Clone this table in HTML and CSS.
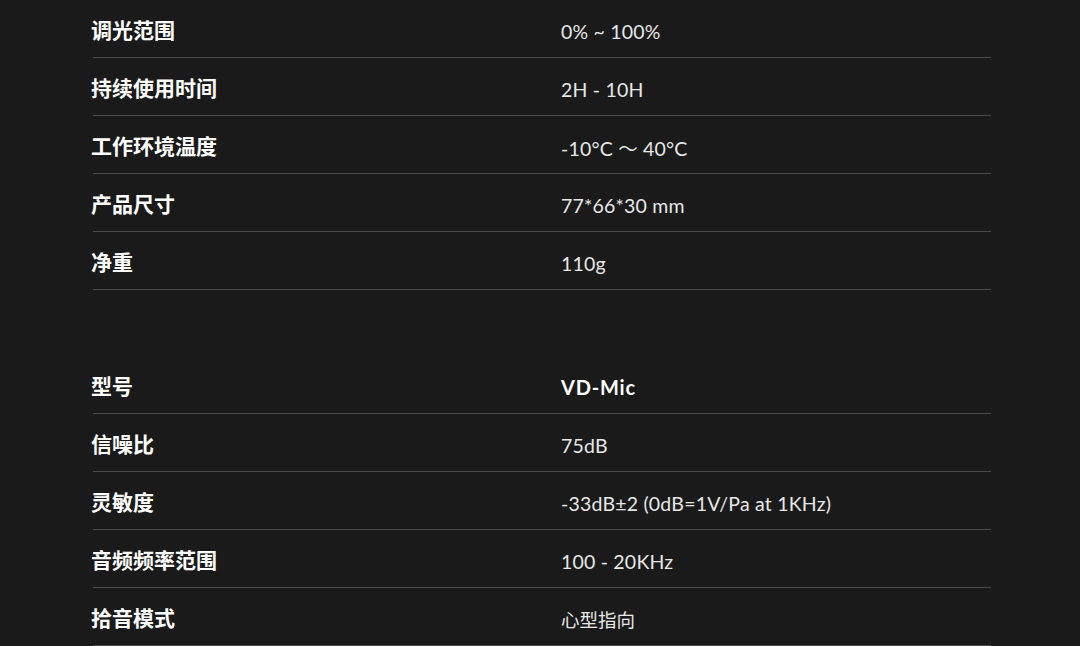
FILE: index.html
```html
<!DOCTYPE html>
<html lang="zh">
<head>
<meta charset="utf-8">
<link rel="stylesheet" href="styles.css">
</head>
<body>
<div class="page">
  <div class="spec">
    <div class="row"><div class="label">调光范围</div><div class="value">0% ~ 100%</div></div>
    <div class="row"><div class="label">持续使用时间</div><div class="value">2H - 10H</div></div>
    <div class="row"><div class="label">工作环境温度</div><div class="value">-10°C ～ 40°C</div></div>
    <div class="row"><div class="label">产品尺寸</div><div class="value">77*66*30 mm</div></div>
    <div class="row"><div class="label">净重</div><div class="value">110g</div></div>
  </div>
  <div class="spec spec-second">
    <div class="row"><div class="label">型号</div><div class="value value-strong">VD-Mic</div></div>
    <div class="row"><div class="label">信噪比</div><div class="value">75dB</div></div>
    <div class="row"><div class="label">灵敏度</div><div class="value">-33dB±2 (0dB=1V/Pa at 1KHz)</div></div>
    <div class="row"><div class="label">音频频率范围</div><div class="value">100 - 20KHz</div></div>
    <div class="row"><div class="label">拾音模式</div><div class="value value-cjk">心型指向</div></div>
  </div>
</div>
</body>
</html>
```
FILE: styles.css
```css
html, body {
  margin: 0;
  padding: 0;
  background: #1a1a1a;
}
.page {
  width: 1080px;
  height: 646px;
  overflow: hidden;
  padding-left: 93px;
  box-sizing: border-box;
  font-family: "Lato", "Noto Sans CJK SC", sans-serif;
}
.spec {
  width: 898px;
}
.spec-second {
  margin-top: 66px;
}
.row {
  display: flex;
  align-items: center;
  height: 58px;
  padding-top: 5px;
  box-sizing: border-box;
  border-bottom: 1px solid #4a4a4a;
}
.label {
  width: 470px;
  margin-left: -2px;
  margin-bottom: 4px;
  font-family: "Noto Sans CJK SC", sans-serif;
  font-weight: 700;
  font-size: 21px;
  color: #ffffff;
}
.value {
  font-size: 19.5px;
  letter-spacing: 0.2px;
  color: #e8e8e8;
  font-family: "Lato", "Noto Sans CJK SC", sans-serif;
}
.value-strong {
  font-weight: 700;
  font-size: 20px;
  letter-spacing: 0.8px;
  color: #ffffff;
}
.value-cjk {
  font-family: "Noto Sans CJK SC", sans-serif;
  font-size: 18.5px;
  letter-spacing: 0;
}
```
